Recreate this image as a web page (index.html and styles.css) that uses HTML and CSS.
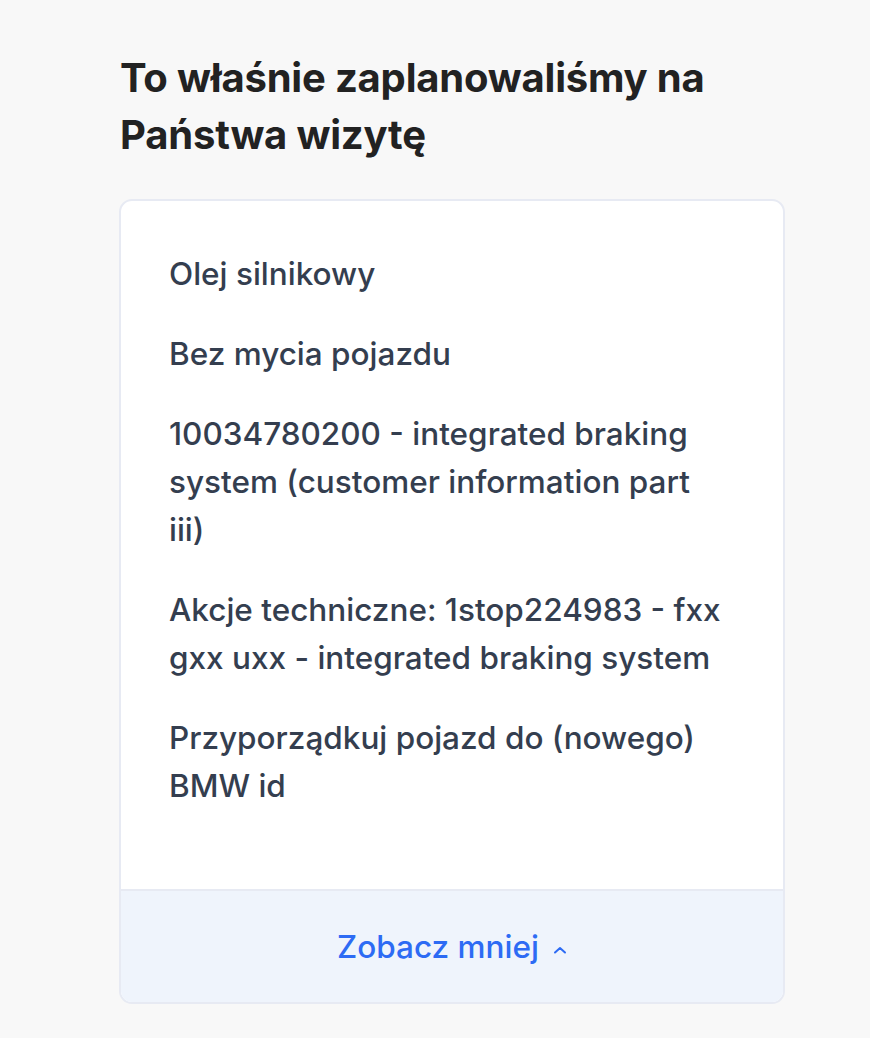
FILE: index.html
```html
<!DOCTYPE html>
<html lang="pl">
<head>
<meta charset="utf-8">
<link rel="stylesheet" href="styles.css">
</head>
<body>
<main class="page">
  <h1 class="title">To właśnie zaplanowaliśmy na Państwa wizytę</h1>
  <section class="card">
    <ul class="items">
      <li>Olej silnikowy</li>
      <li>Bez mycia pojazdu</li>
      <li>10034780200 - integrated braking system (customer information part iii)</li>
      <li>Akcje techniczne: 1stop224983 - fxx gxx uxx - integrated braking system</li>
      <li>Przyporządkuj pojazd do (nowego) BMW id</li>
    </ul>
    <div class="footer">
      <span class="toggle">Zobacz mniej
        <svg class="chev" width="14" height="8" viewBox="0 0 14 8"><path d="M2 6.5 L7 2 L12 6.5" fill="none" stroke="currentColor" stroke-width="2" stroke-linecap="round" stroke-linejoin="round"/></svg>
      </span>
    </div>
  </section>
</main>
</body>
</html>
```
FILE: styles.css
```css
html, body {
  margin: 0;
  padding: 0;
  background: #f8f8f8;
}
.page {
  width: 666px;
  margin: 0 auto 0 119px;
  padding-top: 49px;
}
.title {
  margin: 0 0 36px 1px;
  font-family: Inter, "Noto Sans", sans-serif;
  font-weight: 700;
  font-size: 40px;
  line-height: 57px;
  letter-spacing: -0.2px;
  color: #222222;
}
.card {
  background: #ffffff;
  border: 2px solid #e7eaf3;
  border-radius: 13px;
  overflow: hidden;
}
.items {
  list-style: none;
  margin: 0;
  padding: 49px 51px 79px 48px;
  display: flex;
  flex-direction: column;
  gap: 32px;
  font-family: Inter, "Noto Sans", sans-serif;
  font-weight: 500;
  font-size: 31.5px;
  line-height: 48px;
  color: #343e4f;
}
.items li {
  margin: 0;
}
.footer {
  border-top: 2px solid #e7eaf3;
  background: #eff4fc;
  height: 111px;
  display: flex;
  align-items: center;
  justify-content: center;
}
.toggle {
  display: inline-flex;
  align-items: center;
  gap: 14px;
  font-family: Inter, "Noto Sans", sans-serif;
  font-weight: 500;
  font-size: 31.5px;
  line-height: 40px;
  color: #2d6bf4;
}
.chev {
  display: block;
  margin-top: 6px;
}
```
